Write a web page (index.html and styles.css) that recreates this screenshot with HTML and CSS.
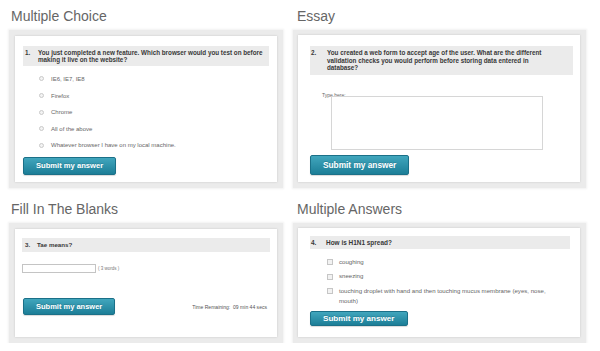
FILE: index.html
```html
<!DOCTYPE html>
<html lang="en">
<head>
<meta charset="utf-8">
<title>Question types</title>
<link rel="stylesheet" href="styles.css">
</head>
<body>
<main class="board">
  <section class="panel">
    <h2 class="title">Multiple Choice</h2>
    <div class="frame">
      <div class="card card-mc">
        <div class="question"><span class="qnum">1.</span><span class="qtext">You just completed a new feature. Which browser would you test on before making it live on the website?</span></div>
        <ul class="options">
          <li><span class="radio"></span>IE6, IE7, IE8</li>
          <li><span class="radio"></span>Firefox</li>
          <li><span class="radio"></span>Chrome</li>
          <li><span class="radio"></span>All of the above</li>
          <li><span class="radio"></span>Whatever browser I have on my local machine.</li>
        </ul>
        <button class="submit submit-mc">Submit my answer</button>
      </div>
    </div>
  </section>

  <section class="panel panel-right">
    <h2 class="title">Essay</h2>
    <div class="frame frame-right">
      <div class="card card-essay">
        <div class="question q-essay"><span class="qnum">2.</span><span class="qtext">You created a web form to accept age of the user. What are the different validation checks you would perform before storing data entered in database?</span></div>
        <div class="type-label">Type here:</div>
        <textarea class="essay-box"></textarea>
        <button class="submit submit-essay">Submit my answer</button>
      </div>
    </div>
  </section>

  <section class="panel">
    <h2 class="title">Fill In The Blanks</h2>
    <div class="frame">
      <div class="card card-fill">
        <div class="question q-fill"><span class="qnum qnum-fill">3.</span><span class="qtext">Tae means?</span></div>
        <div class="blank-row"><input class="blank" type="text"><span class="hint">( 3 words )</span></div>
        <div class="fill-footer">
          <button class="submit submit-fill">Submit my answer</button>
          <span class="timer">Time Remaining:&nbsp; 09 min 44 secs</span>
        </div>
      </div>
    </div>
  </section>

  <section class="panel panel-right">
    <h2 class="title">Multiple Answers</h2>
    <div class="frame frame-right">
      <div class="card card-multi">
        <div class="question q-multi"><span class="qnum">4.</span><span class="qtext">How is H1N1 spread?</span></div>
        <ul class="checks">
          <li><span class="check"></span><span class="check-label">coughing</span></li>
          <li><span class="check"></span><span class="check-label">sneezing</span></li>
          <li><span class="check"></span><span class="check-label">touching droplet with hand and then touching mucus membrane (eyes, nose, mouth)</span></li>
        </ul>
        <button class="submit submit-multi">Submit my answer</button>
      </div>
    </div>
  </section>
</main>
</body>
</html>
```

FILE: styles.css
```css
* { box-sizing: border-box; }

body {
  margin: 0;
  background: #fff;
  font-family: "Liberation Sans", Arial, sans-serif;
}

.board {
  display: grid;
  grid-template-columns: 274px 293px;
  grid-template-rows: 188px 150px;
  column-gap: 10px;
  row-gap: 5px;
  padding-left: 9px;
}

.panel {
  display: flex;
  flex-direction: column;
}

.title {
  margin: 7px 0 5px 2px;
  font-size: 14px;
  line-height: 18px;
  font-weight: normal;
  color: #666;
}

.panel-right .title { margin-left: 4px; }

.frame {
  flex: 1;
  display: flex;
  padding: 6px;
  background: #ebebeb;
  box-shadow: 0 0 2px 1px #f1f1f1;
}

.frame-right { padding: 5px 6px 6px 5px; }

.card {
  flex: 1;
  display: flex;
  flex-direction: column;
  align-items: flex-start;
  background: #fff;
  box-shadow: 0 0 2px rgba(0, 0, 0, 0.16);
}

.question {
  align-self: stretch;
  display: flex;
  background: #ebebeb;
  color: #383838;
  font-weight: bold;
  font-size: 6.3px;
  line-height: 7.5px;
  padding: 2.5px 2px;
}

.qnum { flex: 0 0 13px; }
.qtext { flex: 1; }

/* Multiple choice */
.card-mc { padding: 10px 8px 0 8px; }

.options {
  list-style: none;
  margin: 4.7px 0 0 0;
  padding: 0 0 0 16px;
  color: #666;
  font-size: 6px;
}

.options li {
  height: 16.6px;
  display: flex;
  align-items: center;
}

.radio {
  width: 5px;
  height: 5px;
  margin-right: 7px;
  border-radius: 50%;
  border: 1px solid #c9c9c9;
  background: #f3f3f3;
}

.submit {
  display: block;
  margin: 0;
  padding: 0 12px;
  white-space: nowrap;
  border: 1px solid #1b7088;
  border-radius: 2px;
  background: linear-gradient(#41a6bd, #1c7e97);
  color: #fff;
  font-family: "Liberation Sans", Arial, sans-serif;
  font-weight: bold;
  text-shadow: 0 -1px 0 rgba(0, 0, 0, 0.15);
  box-shadow: 0 1px 1px rgba(0, 0, 0, 0.15);
}

.submit-mc {
  margin-top: 3.3px;
  height: 18px;
  font-size: 7.6px;
}

/* Essay */
.card-essay { padding: 11px 7px 0 12px; }

.q-essay { padding: 3px 16px 3px 1px; }
.q-essay .qnum { flex-basis: 16px; }

.type-label {
  margin: 17px 0 0 12px;
  font-size: 5px;
  line-height: 6px;
  color: #666;
}

.essay-box {
  display: block;
  margin: -2px 0 0 21px;
  width: 212px;
  height: 54px;
  border: 1px solid #d6d6d6;
  resize: none;
  background: #fff;
}

.submit-essay {
  margin-top: 5px;
  height: 20px;
  font-size: 8.3px;
}

/* Fill in the blanks */
.card-fill { padding: 9px 7px 0 7px; }

.q-fill {
  padding: 3.25px 3px;
  font-size: 6.2px;
}

.qnum-fill { flex-basis: 12px; }

.blank-row {
  display: flex;
  align-items: center;
  margin-top: 12px;
}

.blank {
  width: 74px;
  height: 9px;
  margin: 0;
  padding: 0;
  border: 1px solid #c4c4c4;
  background: #fff;
}

.hint {
  margin-left: 2px;
  font-size: 4.5px;
  color: #777;
}

.fill-footer {
  align-self: stretch;
  display: flex;
  justify-content: space-between;
  align-items: center;
  margin-top: 25px;
  padding: 0 3px 0 1px;
}

.submit-fill {
  height: 17px;
  font-size: 7.5px;
}

.timer {
  font-size: 5.05px;
  color: #555;
}

/* Multiple answers */
.card-multi { padding: 8px 10px 0 12px; }

.q-multi {
  padding: 2.75px 2px 2.75px 1px;
  font-size: 6.45px;
}

.q-multi .qnum { flex-basis: 15px; }

.checks {
  list-style: none;
  margin: 7.75px 0 0 0;
  padding: 0 0 0 17px;
  display: flex;
  flex-direction: column;
  gap: 4px;
  color: #666;
  font-size: 6.1px;
  line-height: 10.5px;
}

.checks li {
  display: flex;
  align-items: flex-start;
}

.check-label { max-width: 224px; }

.check {
  flex: 0 0 6px;
  height: 6px;
  margin: 2.25px 6px 0 0;
  border: 1px solid #c6c6c6;
  background: #f2f2f2;
}

.submit-multi {
  margin-top: 4px;
  height: 15.5px;
  font-size: 8.1px;
}
```
